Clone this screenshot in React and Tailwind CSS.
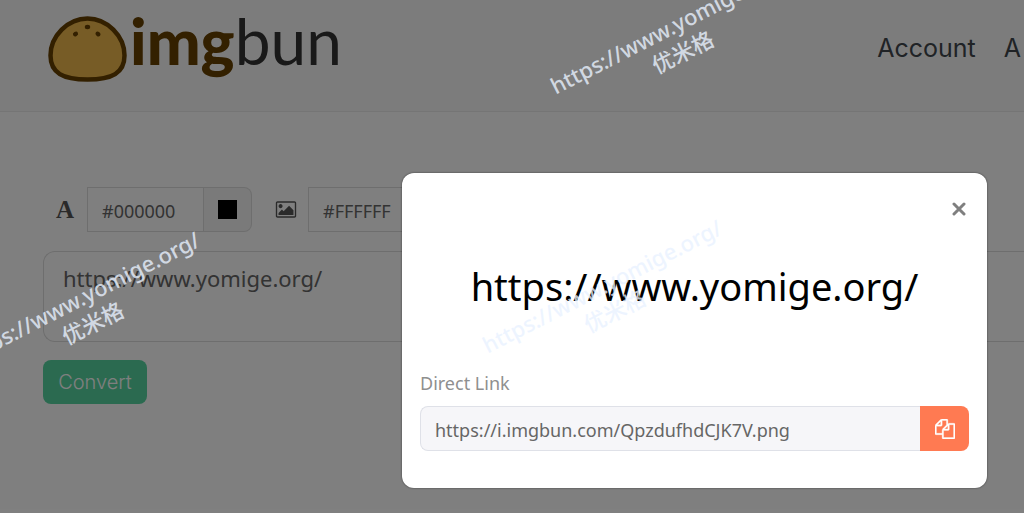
import { useState } from 'react';

const SOURCE_TEXT = 'https://www.yomige.org/';

const navLinks = ['Account', 'A'];

function BunIcon() {
  return (
    <svg className="w-[79px] h-[66px] shrink-0" viewBox="0 0 79 66" aria-hidden="true">
      <path
        d="M39.500 2.500C20 2.500 2.500 20 2.500 39.500C2.500 57 15 63.500 39.500 63.500C64 63.500 76.500 57 76.500 39.500C76.500 20 59 2.500 39.500 2.500Z"
        fill="#eeb84c"
        stroke="#664000"
        strokeWidth="4.500"
      />
      <ellipse cx="39.500" cy="11" rx="2.700" ry="2.200" fill="#664000" />
      <ellipse cx="27.500" cy="18" rx="2.700" ry="2.200" fill="#664000" transform="rotate(-30 27.500 18)" />
      <ellipse cx="50" cy="18" rx="2.700" ry="2.200" fill="#664000" transform="rotate(40 50 18)" />
    </svg>
  );
}

function PictureIcon() {
  return (
    <svg className="w-[22px] h-[19px]" viewBox="0 0 2048 1792" fill="currentColor" aria-hidden="true">
      <path d="M704 576q0 80-56 136t-136 56-136-56-56-136 56-136 136-56 136 56 56 136zm1024 384v448h-1408v-192l320-320 160 160 512-512zm96-704h-1600q-13 0-22.500 9.500t-9.500 22.500v1216q0 13 9.500 22.500t22.500 9.500h1600q13 0 22.500-9.500t9.500-22.500v-1216q0-13-9.500-22.500t-22.500-9.500zm160 32v1216q0 66-47 113t-113 47h-1600q-66 0-113-47t-47-113v-1216q0-66 47-113t113-47h1600q66 0 113 47t47 113z" />
    </svg>
  );
}

function CopyIcon() {
  return (
    <svg className="w-5 h-5" viewBox="0 0 1792 1792" fill="currentColor" stroke="currentColor" strokeWidth="30" aria-hidden="true">
      <path d="M1696 384q40 0 68 28t28 68v1216q0 40-28 68t-68 28h-960q-40 0-68-28t-28-68v-288h-544q-40 0-68-28t-28-68v-672q0-40 20-88t48-76l408-408q28-28 76-48t88-20h416q40 0 68 28t28 68v328q68-40 128-40h416zm-544 213l-299 299h299v-299zm-640-384l-299 299h299v-299zm196 647l316-316v-416h-384v416q0 40-28 68t-68 28h-416v640h512v-256q0-40 20-88t48-76zm956 804v-1152h-384v416q0 40-28 68t-68 28h-416v640h896z" />
    </svg>
  );
}

function ColorField({ id, label, icon, value, onChange }) {
  return (
    <div className="flex items-center">
      <label htmlFor={id} aria-label={label} className="w-11 flex justify-center text-[#555]">
        {icon}
      </label>
      <input
        id={id}
        type="text"
        value={value}
        onChange={(e) => onChange(e.target.value)}
        className="w-[117px] h-[45px] px-[14px] pt-[2px] border border-[#dcdcdc] text-lg text-[#666] outline-none"
      />
      <button
        type="button"
        aria-label={`Pick ${label}`}
        className="w-12 h-[45px] flex items-center justify-center bg-[#f4f4f4] border border-l-0 border-[#dcdcdc] rounded-r-lg"
      >
        <span className="w-[19px] h-[19px]" style={{ backgroundColor: value }} />
      </button>
    </div>
  );
}

function Watermark({ className }) {
  return (
    <div
      className={`absolute w-[272px] -rotate-[27deg] text-center text-[22px] leading-7 font-medium text-[#e9f2ff]/80 pointer-events-none ${className}`}
    >
      <p className="whitespace-nowrap">{SOURCE_TEXT}</p>
      <p>优米格</p>
    </div>
  );
}

function LinkDialog({ onClose }) {
  return (
    <div
      role="dialog"
      aria-modal="true"
      className="w-[585px] rounded-xl bg-white px-[18px] pt-6 pb-[37px] shadow-[0_0_2px_rgba(0,0,0,0.6)]"
    >
      <div className="flex justify-end">
        <button type="button" aria-label="Close" onClick={onClose} className="w-5 h-6 flex items-center justify-center text-[#7f7f7f]">
          <svg className="w-[14px] h-[14px]" viewBox="0 0 14 14" stroke="currentColor" strokeWidth="3" strokeLinecap="round" aria-hidden="true">
            <path d="M2 2L12 12M12 2L2 12" />
          </svg>
        </button>
      </div>
      <p className="mt-[35px] text-center text-[38px] leading-[60px] text-black">{SOURCE_TEXT}</p>
      <label htmlFor="direct-link" className="block mt-[55px] text-lg leading-6 text-[#8f8f8f]">
        Direct Link
      </label>
      <div className="mt-[11px] flex">
        <input
          id="direct-link"
          type="text"
          readOnly
          value="https://i.imgbun.com/QpzdufhdCJK7V.png"
          className="flex-1 min-w-0 h-[45px] px-[14px] pt-[2px] rounded-l-lg border border-r-0 border-[#dfe1e8] bg-[#f6f6f9] text-lg text-[#666] outline-none"
        />
        <button type="button" aria-label="Copy link" className="w-[49px] h-[45px] flex items-center justify-center rounded-r-lg bg-[#ff7a52] text-white">
          <CopyIcon />
        </button>
      </div>
    </div>
  );
}

export default function App() {
  const [text, setText] = useState(SOURCE_TEXT);
  const [fontColor, setFontColor] = useState('#000000');
  const [backColor, setBackColor] = useState('#FFFFFF');
  const [open, setOpen] = useState(true);

  return (
    <div className="relative min-h-screen overflow-hidden bg-white font-['Noto_Sans','Noto_Sans_CJK_SC',sans-serif]">
      <header className="h-28 flex items-start justify-between pl-12 bg-[#f9f9f9] border-b border-[#eaeaea]">
        <a href="#home" className="flex mt-4 gap-[3px] font-['Lato',sans-serif] text-[64px] leading-[50px]">
          <BunIcon />
          <span className="text-[#333]">
            <span className="font-black text-[#664000]">img</span>bun
          </span>
        </a>
        <nav className="mt-8 flex gap-7 pr-[3px] font-['Inter',sans-serif] text-[25px] leading-8 text-[#40464c]">
          {navLinks.map(link => (
            <a key={link} href="#account">{link}</a>
          ))}
        </nav>
      </header>

      <main className="pt-[75px] pl-[43px]">
        <div className="flex gap-3">
          <ColorField
            id="font-color"
            label="text color"
            icon={<span className="font-['Liberation_Serif',serif] font-bold text-[25px] leading-6">A</span>}
            value={fontColor}
            onChange={setFontColor}
          />
          <ColorField
            id="back-color"
            label="background color"
            icon={<PictureIcon />}
            value={backColor}
            onChange={setBackColor}
          />
        </div>
        <textarea
          aria-label="Text to convert"
          value={text}
          onChange={(e) => setText(e.target.value)}
          className="block w-full h-[91px] mt-[19px] pl-[19px] pt-[10px] resize-none rounded-l-xl border border-r-0 border-[#dcdcdc] text-[22px] leading-8 text-[#666] outline-none"
        />
        <button
          type="button"
          className="mt-[18px] w-[104px] h-11 rounded-lg bg-[#56d4a0] font-['Inter',sans-serif] font-light text-[20px] text-white"
        >
          Convert
        </button>
      </main>

      {open && (
        <div className="absolute inset-0 flex items-start justify-end bg-black/50 pt-[173px] pr-[37px]">
          <LinkDialog onClose={() => setOpen(false)} />
        </div>
      )}

      <Watermark className="left-[540px] top-[11px]" />
      <Watermark className="left-[472px] top-[270px]" />
      <Watermark className="-left-[50px] top-[282px]" />
    </div>
  );
}
